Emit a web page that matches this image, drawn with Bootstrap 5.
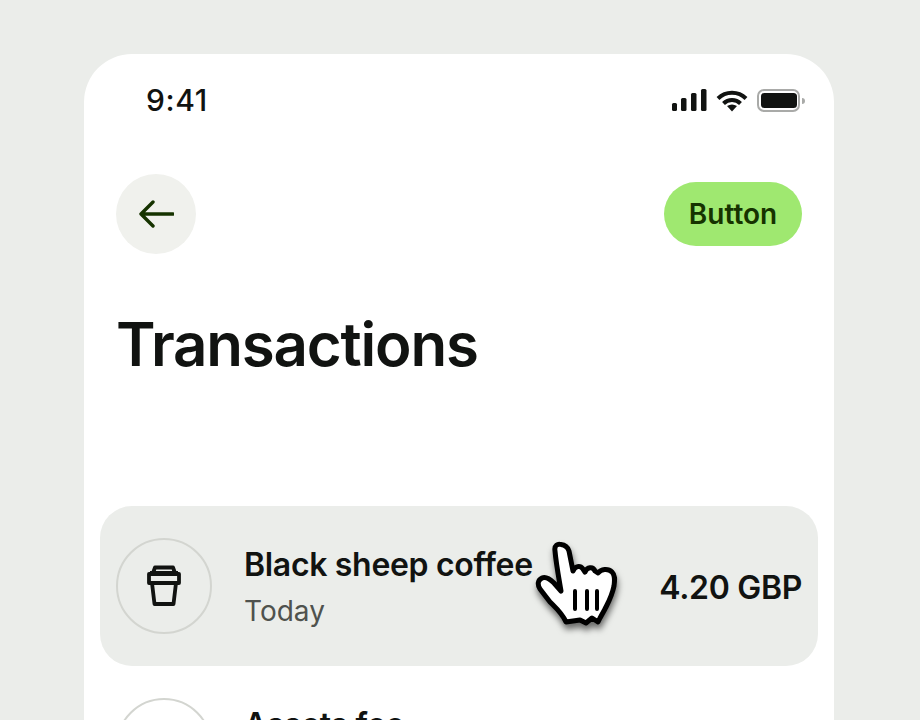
<!DOCTYPE html>
<html lang="en">
<head>
  <meta charset="UTF-8">
  <title>Transactions</title>
  <link rel="stylesheet" href="https://cdn.jsdelivr.net/npm/bootstrap@5.3.3/dist/css/bootstrap.min.css">
  <style>
    html, body { height: 720px; overflow: hidden; }
    body { background: #ebedea; font-family: Inter, "Liberation Sans", sans-serif; color: #111311; }
    .stage { padding: 54px 86px 0 84px; }
    .phone { background: #fff; border-radius: 48px 48px 0 0; height: 666px; overflow: hidden; padding: 0 16px; }
    .status-bar { height: 92px; padding: 0 10px 0 46px; }
    .clock { font-size: 30px; font-weight: 500; line-height: 1; letter-spacing: .6px; }
    .top-bar { margin-top: 28px; padding: 0 16px; height: 80px; }
    .back-btn { width: 80px; height: 80px; background: #f0f1ed; border: 0; }
    .back-btn:hover { background: #f0f1ed; }
    .action-btn { height: 64px; width: 138px; border-radius: 32px; background: #9fe870; color: #163300; border: 0; font-size: 28px; font-weight: 600; padding: 0; }
    .page-title { font-size: 60px; font-weight: 600; line-height: 72px; margin: 54px 0 0; padding-left: 16px; letter-spacing: -1.2px; }
    .tx-list { margin-top: 126px; }
    .tx-row { height: 160px; padding: 0 16px; border-radius: 32px; gap: 32px; position: relative; }
    .tx-row.is-hover { background: #ebedea; }
    .tx-icon { width: 96px; height: 96px; border: 2px solid #d3d5d0; flex: none; }
    .tx-text { padding-top: 4px; }
    .tx-name { font-size: 32px; font-weight: 600; line-height: 40px; letter-spacing: -.32px; }
    .tx-sub { font-size: 28px; line-height: 40px; color: #4f524e; margin-top: 6px; }
    .tx-amount { font-size: 32px; font-weight: 600; letter-spacing: -.32px; padding-top: 3px; }
    .hand { position: absolute; left: 420px; top: 25px; filter: drop-shadow(1px 5px 3px rgba(0,0,0,.55)); }
  </style>
</head>
<body>
  <div class="stage">
    <div class="phone">
      <div class="status-bar d-flex align-items-center justify-content-between">
        <span class="clock">9:41</span>
        <svg width="138" height="24" viewBox="0 0 138 24">
          <g fill="#111311">
            <rect x="2" y="15" width="5" height="8" rx="1.500"/>
            <rect x="11" y="10" width="5.500" height="13" rx="1.500"/>
            <rect x="21" y="5" width="5.500" height="18" rx="1.500"/>
            <rect x="31" y="1" width="5.500" height="22" rx="1.500"/>
            <path d="M57 18q5-3 10 0l-5 5.500z"/>
          </g>
          <path d="M48 10.500a20 20 0 0 1 28 0M53.500 15.500a12 12 0 0 1 17 0" fill="none" stroke="#111311" stroke-width="4"/>
          <rect x="88" y="2" width="41" height="21" rx="6" fill="none" stroke="#a9aaa8" stroke-width="2"/>
          <rect x="91" y="5" width="36" height="15" rx="3.500" fill="#111311"/>
          <path d="M132 10a3 3 0 0 1 0 6z" fill="#a9aaa8"/>
        </svg>
      </div>

      <div class="top-bar d-flex align-items-center justify-content-between">
        <button class="btn back-btn rounded-circle d-flex align-items-center justify-content-center p-0" type="button" aria-label="Back">
          <svg width="36" height="30" viewBox="0 0 36 30" fill="none" stroke="#163300" stroke-width="3.400" stroke-linecap="round" stroke-linejoin="round">
            <path d="M35 15H3M15 3 3 15l12 12"/>
          </svg>
        </button>
        <button class="btn action-btn" type="button">Button</button>
      </div>

      <h1 class="page-title">Transactions</h1>

      <div class="tx-list">
        <div class="tx-row is-hover d-flex align-items-center">
          <div class="tx-icon rounded-circle d-flex align-items-center justify-content-center">
            <svg width="34" height="42" viewBox="0 0 34 42" fill="none" stroke="#111311" stroke-width="3.800" stroke-linejoin="round">
              <path d="M3 8h28M6 8l2-5.500h18L28 8"/>
              <path d="M2 9h30v9H2z"/>
              <path d="M5 18l2.500 21h19L29 18"/>
            </svg>
          </div>
          <div class="tx-text flex-grow-1">
            <div class="tx-name">Black sheep coffee</div>
            <div class="tx-sub">Today</div>
          </div>
          <div class="tx-amount">4.20 GBP</div>
          <svg class="hand" width="110" height="110" viewBox="0 0 110 110">
            <path d="M35 20C34 14 38 12.500 41 13.500C46 14 48 17 49 20L53 40C55 35 60 34 63 38L65 41C67 36 73 35 75 40L78 42C81 38 88 37 92 41C95 44 95 48 94 55C92 65 88 72 85 78L80 87 78 91 72 87 66 92 60 89 46 91C42 82 36 77 30 71L20 58C17 53 18 49 22 47C26 45 30 48 34 52L41 60C39 48 36 32 35 20Z" fill="#fff" stroke="#000" stroke-width="5" stroke-linejoin="round"/>
            <path d="M55 60v18M67 60v18M77 60v18" stroke="#000" stroke-width="4" stroke-linecap="round"/>
          </svg>
        </div>
        <div class="tx-row d-flex align-items-center">
          <div class="tx-icon rounded-circle"></div>
          <div class="tx-text flex-grow-1">
            <div class="tx-name">Assets fee</div>
            <div class="tx-sub">Today</div>
          </div>
        </div>
      </div>
    </div>
  </div>
  <script src="https://cdn.jsdelivr.net/npm/bootstrap@5.3.3/dist/js/bootstrap.bundle.min.js"></script>
</body>
</html>
